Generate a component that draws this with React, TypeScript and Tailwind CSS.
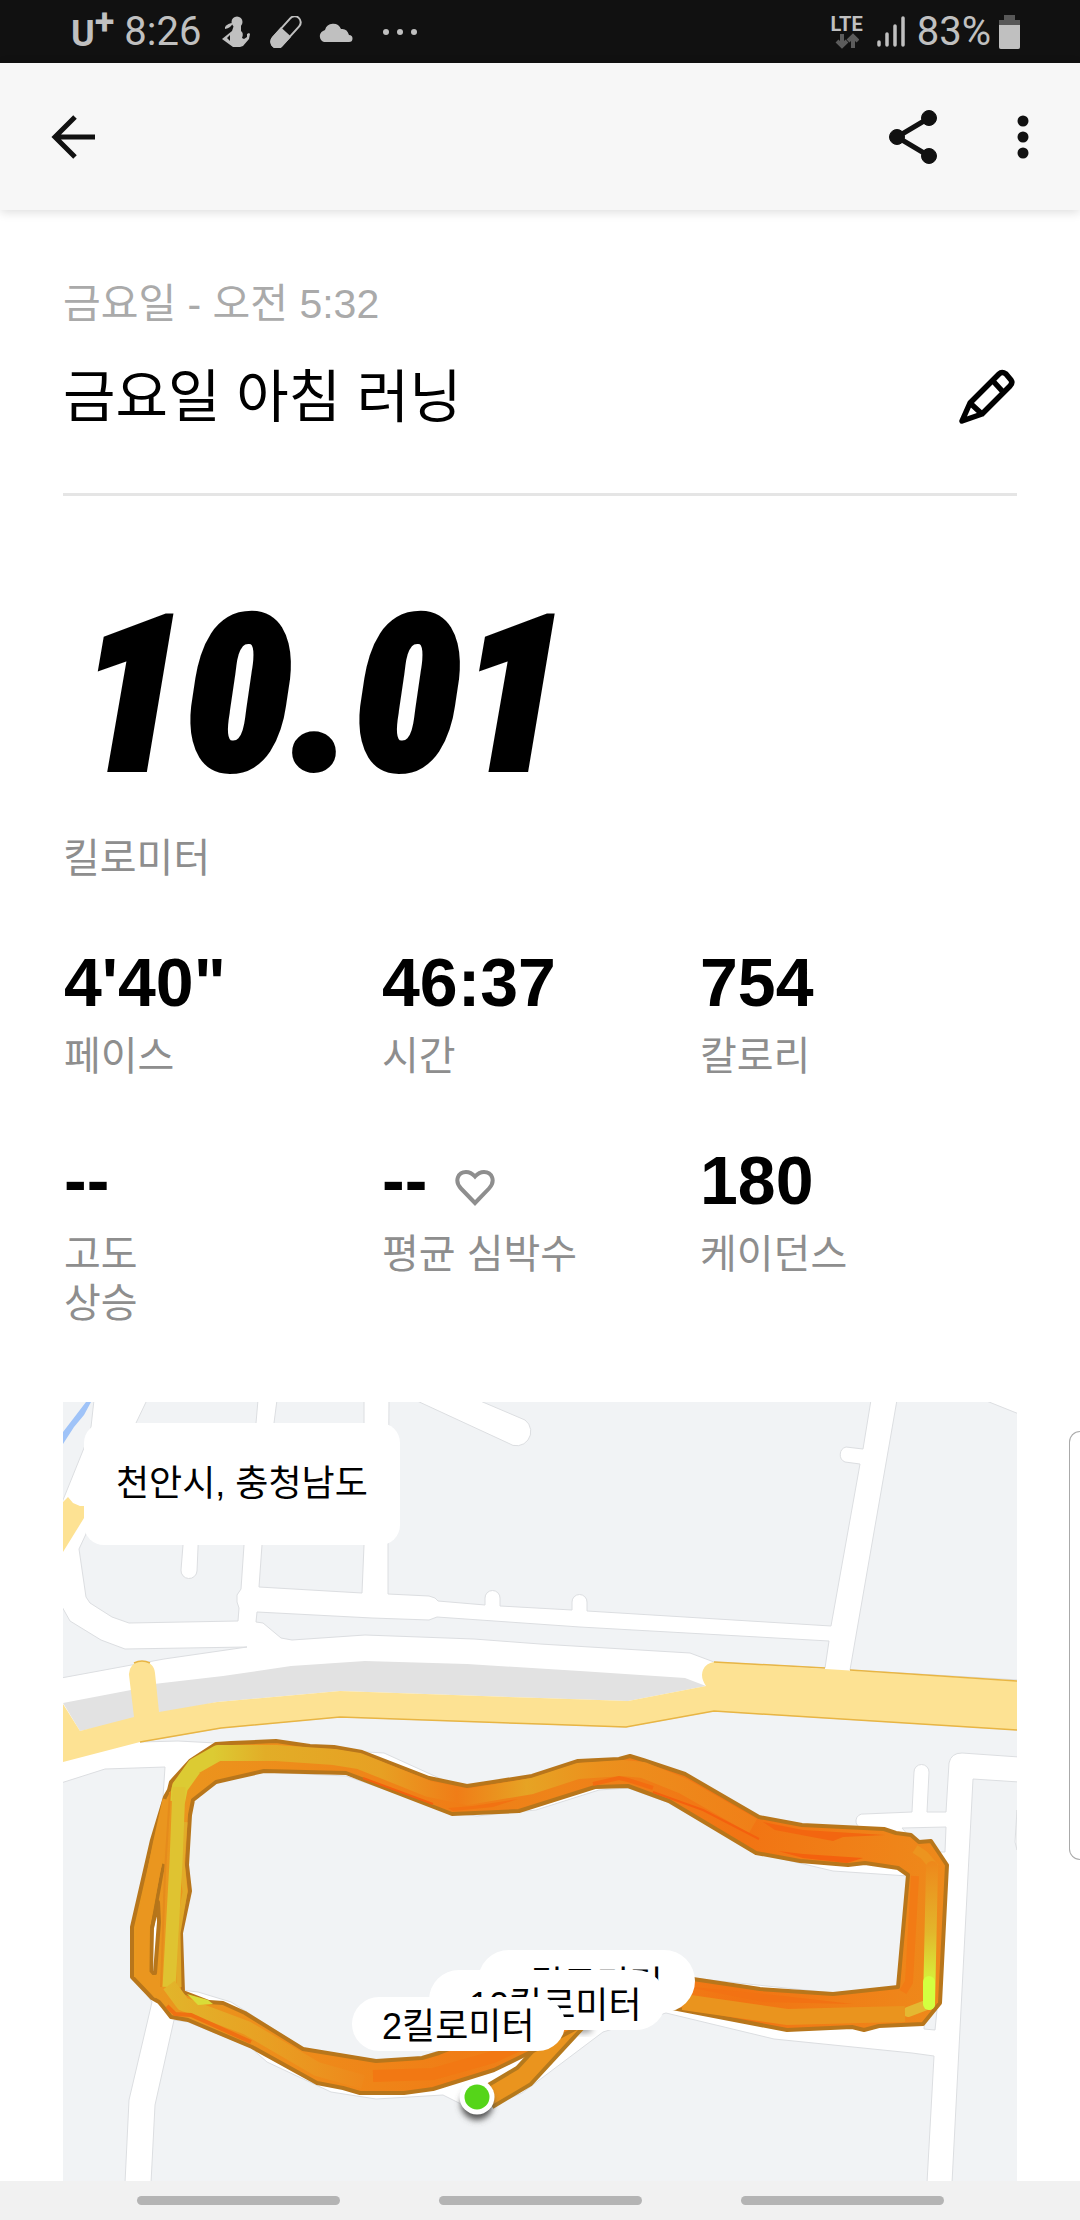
import type { ReactNode } from "react";

type Stat = {
  value: string;
  label: ReactNode;
  heart?: boolean;
};

const stats: Stat[] = [
  { value: "4'40\"", label: "페이스" },
  { value: "46:37", label: "시간" },
  { value: "754", label: "칼로리" },
  {
    value: "--",
    label: (
      <>
        고도
        <br />
        상승
      </>
    ),
  },
  { value: "--", label: "평균 심박수", heart: true },
  { value: "180", label: "케이던스" },
];

// City blocks, everything between them reads as road
const blocks = [
  "M-2 -2H31L28 25L21 46L-2 103Z",
  "M84 -2H195L193 21V60H60L73 21Z",
  "M214 -2H301V60H209L211 21Z",
  "M326 -2H352L445 41A12 12 0 0 0 462 18L415 -2H808L800 47L783 45A8 8 0 0 0 782 60L797 62L768 224L524 209V200A7 7 0 0 0 509 200V208L437 204V196A7 7 0 0 0 422 196V203L375 199L372 196L366 194L325 192V140Z",
  "M834 -2H921L956 12V278L787 268Z",
  "M766 239L762 266L651 260L627 251L477 242L411 237L302 233L229 238L218 236L200 221L193 220L194 210L309 216L366 218L374 215L517 225Z",
  "M196 185L299 191L301 143V100H199V143Z",
  "M23 132L16 147L23 195L27 201L49 215L66 221L175 219L176 206L174 200L174 193L178 187L181 143V100H137L134 169A8 8 0 0 1 118 168L120 143V100H30Z",
  "M-2 203L7 219L38 238L62 247L184 245L101 257L-2 276Z",
  "M77 340L158 326L277 315L477 322L563 325L651 309L956 328V355L899 351Q888 351 886 361L883 410H864L866 370A7 7 0 0 0 851 370L849 410L801 412A7 7 0 0 0 799 426L821 429L739 426L696 418L622 374L567 358L515 362L469 377L404 387L376 376L321 351L153 341L115 339Z",
  "M883 425L882 450H860L839 426Z",
  "M201 370L283 374L390 411L414 414L473 408L536 388L565 386L604 400L694 451L770 469L845 474L835 586L770 591L628 576L500 600L359 655L313 658L240 646L184 610L168 600L135 590L119 588L118 531L127 488L123 411L128 398L153 380Z",
  "M-2 381L42 367L102 365L100 395L71 525V575L89 600L66 698L62 781H-2Z",
  "M111 618L92 703L88 781H864L871 654L849 651L711 637L603 611L540 630L459 691L430 703H400L380 693L313 697L268 690L204 660L187 645L125 620Z",
  "M874 608L872 628L861 627L862 615Z",
  "M910 377L956 380V781H889Z",
];

const routeShape =
  "M153 342L168 341L213 339L247 344L271 345L299 350L366 376L404 384L469 374L515 359L556 357L567 354L580 358L622 372L696 415L739 423L821 427L833 431L848 433L856 440L868 439L884 463L877 601L860 622L816 624L801 628L789 625L724 628L604 605L540 612L476 646L431 668L370 687L341 691L297 691L280 686L254 681L189 645L125 618L108 615L101 606L96 600L89 596L69 575V525L89 438L102 395L106 388L108 380L127 359Z" +
  "M153 380L201 369L283 371L389 412L456 409L532 385L565 384L606 399L693 451L737 459L785 463L802 461L835 466L845 473L835 585L770 592L697 587L630 577L560 575L480 610L376 651L359 656L313 659L240 647L182 611L160 601L146 600L120 590L118 531L127 489L124 463L127 413L130 398Z" +
  "M89 526L95 500L96 520L92 571H88Z";

function StatusBar() {
  return (
    <div className="flex h-[63px] items-center justify-between bg-[#111] pr-[60px] pl-[71px] font-['Roboto',sans-serif] text-[40px] leading-none text-[#c0c0c0]">
      <div className="flex items-center">
        <span className="mt-1 flex text-[36px] leading-9 font-bold">
          U<span className="-mt-3">+</span>
        </span>
        <span className="ml-[10px]">8:26</span>
        <svg className="ml-5 h-8 w-7" viewBox="0 0 28 32" fill="currentColor">
          <circle cx="15" cy="6" r="5.500" />
          <path d="M12 9h7v6q3 2 1 7l2 1 3-2v-3l2-1 1 1-1 5-6 7-3 1H11L0 23l10-8Z" />
          <path d="M3 11q3-4 8-4-2 5-8 6Z" />
          <path d="M5 22l3-3v6Z" fill="#111" />
        </svg>
        <svg className="ml-5 h-8 w-8" viewBox="0 0 32 32" fill="none" stroke="currentColor">
          <g transform="rotate(42 16 16)">
            <rect x="10" y="-3" width="12" height="38" rx="6" strokeWidth="2" />
            <path d="M9 16H23V29A7 7 0 0 1 9 29Z" fill="currentColor" stroke="none" />
          </g>
        </svg>
        <svg className="ml-4 h-5 w-9" viewBox="0 0 36 20" fill="currentColor">
          <path d="M6 20A6 6 0 0 1 5 9Q7 8 7 8A8.500 8.500 0 0 1 23 7Q29 6 31 13A3.500 3.500 0 0 1 31 20Z" />
        </svg>
        <svg className="ml-7 h-2 w-9" viewBox="0 0 36 8" fill="currentColor">
          <circle cx="4" cy="4" r="3" />
          <circle cx="18" cy="4" r="3" />
          <circle cx="32" cy="4" r="3" />
        </svg>
      </div>
      <div className="flex items-center">
        <div className="flex flex-col items-center">
          <span className="text-[20px] leading-[18px] font-bold">LTE</span>
          <svg className="h-4 w-6" viewBox="0 0 24 16" fill="none" stroke="#5c5c5c" strokeWidth="4">
            <path d="M7 1V13M2 8L7 13L12 8M18 15V3M13 8L18 3L23 8" />
          </svg>
        </div>
        <svg className="ml-[14px] h-8 w-7" viewBox="0 0 28 32" stroke="currentColor" strokeWidth="3.500" strokeLinecap="round">
          <path d="M2 26V29M10 18V29M18 10V29M26 2V29" />
        </svg>
        <span className="ml-3">83%</span>
        <svg className="ml-2 h-[34px] w-[21px]" viewBox="0 0 21 34">
          <path d="M5 0H16V5H21V32Q21 34 19 34H2Q0 34 0 32V5H5Z" fill="#585858" />
          <path d="M0 10H21V32Q21 34 19 34H2Q0 34 0 32Z" fill="#c0c0c0" />
        </svg>
      </div>
    </div>
  );
}

function AppBar() {
  return (
    <header className="relative flex h-[147px] items-center justify-between bg-[#f7f7f7] px-[51px] text-[#111] shadow-[0_2px_10px_rgba(0,0,0,0.14)]">
      <button type="button" aria-label="뒤로">
        <svg className="h-11 w-11" viewBox="0 0 44 44" fill="none" stroke="currentColor" strokeWidth="5">
          <path d="M44 22H5M24 2L4 22L24 42" />
        </svg>
      </button>
      <div className="flex items-center gap-20">
        <button type="button" aria-label="공유">
          <svg className="h-14 w-12" viewBox="0 0 48 56" fill="currentColor" stroke="currentColor">
            <path d="M40 9L8 28L40 47" fill="none" strokeWidth="5" />
            <circle cx="40" cy="9" r="7.500" strokeWidth="1" />
            <circle cx="8" cy="28" r="7.500" strokeWidth="1" />
            <circle cx="40" cy="47" r="7.500" strokeWidth="1" />
          </svg>
        </button>
        <button type="button" aria-label="더보기">
          <svg className="h-11 w-3" viewBox="0 0 12 44" fill="currentColor">
            <circle cx="6" cy="6" r="5.500" />
            <circle cx="6" cy="22" r="5.500" />
            <circle cx="6" cy="38" r="5.500" />
          </svg>
        </button>
      </div>
    </header>
  );
}

function StatCell({ value, label, heart }: Stat) {
  return (
    <div className="pl-px">
      <dd className="flex h-[72px] items-center gap-7 text-[68px] leading-[72px] font-bold text-black">
        {value}
        {heart && (
          <svg className="mt-4 h-9 w-10" viewBox="0 0 40 36" fill="none" stroke="#8e8e8e" strokeWidth="4">
            <path d="M20 33L6 18.500C-1 11 3 2 11 2Q16 2 20 6.500Q24 2 29 2C37 2 41 11 34 18.500Z" />
          </svg>
        )}
      </dd>
      <dt className="mt-[14px] text-[40px] leading-[49px] text-[#8e8e8e]">{label}</dt>
    </div>
  );
}

function RouteMap() {
  return (
    <svg className="block w-full" viewBox="0 0 954 779" fill="none">
      <defs>
        <linearGradient id="heat" gradientUnits="userSpaceOnUse" x1="70" y1="0" x2="884" y2="0">
          <stop offset="0" stopColor="#e9981f" />
          <stop offset="0.2" stopColor="#ee8c1a" />
          <stop offset="0.4" stopColor="#f07d16" />
          <stop offset="0.52" stopColor="#ee8419" />
          <stop offset="0.75" stopColor="#f27413" />
          <stop offset="1" stopColor="#ee8a1b" />
        </linearGradient>
        <linearGradient id="top" gradientUnits="userSpaceOnUse" x1="115" y1="0" x2="696" y2="0">
          <stop offset="0" stopColor="#dccb33" />
          <stop offset="0.06" stopColor="#dccb33" />
          <stop offset="0.15" stopColor="#e2ad27" />
          <stop offset="0.35" stopColor="#e7a023" />
          <stop offset="0.48" stopColor="#f07d17" />
          <stop offset="0.6" stopColor="#e6a324" />
          <stop offset="0.72" stopColor="#ec911d" />
          <stop offset="1" stopColor="#f07f18" />
        </linearGradient>
        <linearGradient id="east" gradientUnits="userSpaceOnUse" x1="0" y1="460" x2="0" y2="600">
          <stop offset="0" stopColor="#ee881b" />
          <stop offset="0.5" stopColor="#e2b62b" />
          <stop offset="0.8" stopColor="#d8e838" />
          <stop offset="1" stopColor="#d3ff40" />
        </linearGradient>
        <linearGradient id="south" gradientUnits="userSpaceOnUse" x1="105" y1="0" x2="300" y2="0">
          <stop offset="0" stopColor="#e2b42a" />
          <stop offset="0.5" stopColor="#e8a023" />
          <stop offset="1" stopColor="#ee881b" />
        </linearGradient>
        <filter id="soft" x="-50%" y="-50%" width="200%" height="200%">
          <feGaussianBlur stdDeviation="3" />
        </filter>
      </defs>

      <rect width="954" height="779" fill="#fff" />
      <g fill="#f1f3f5" stroke="#dcdee1">
        {blocks.map((d) => (
          <path key={d} d={d} />
        ))}
      </g>
      <path d="M23 0H28L21 13L11 25L0 42V30L10 17Z" fill="#9fc3f8" />
      <path d="M954 408L952 440L954 448Z" fill="#fff" stroke="#dcdee1" />

      {/* Main road */}
      <path d="M0 301L68 288L91 282L160 274L228 264L302 259L404 262L517 269L622 276L643 284L565 299L477 296L277 289L154 300L17 329Z" fill="#e2e2e2" />
      <g fill="#fde293">
        <path d="M0 100L5 95L10 101L17 104H21V116L0 150Z" />
        <path d="M0 302L17 329L71 315L66 273A13 13 0 0 1 92 271L96 310L154 300L277 289L477 296L565 299L643 284Q637 275 640 268Q643 261 651 260L954 279V328L651 309L563 325L477 322L277 315L158 326L77 340L0 360Z" />
      </g>
      <path
        d="M77 340L158 326L277 315L477 322L563 325L651 309L954 328M651 260L762 266M787 268L954 279M71 261Q79 257 87 261"
        stroke="#e8b544"
        strokeWidth="1.500"
      />

      {/* Recorded route */}
      <ellipse cx="520" cy="627" rx="10" ry="4" fill="#999" filter="url(#soft)" />
      <path d="M424 696L461 674L520 610" stroke="#b5791c" strokeWidth="25" />
      <path d="M424 696L461 674L520 610" stroke="#ea941e" strokeWidth="17" />
      <path d={routeShape} fill="url(#heat)" fillRule="evenodd" stroke="#b8761b" strokeWidth="4" strokeLinejoin="round" />
      <path d="M89 526L99 470L101 462" stroke="#b5751a" strokeWidth="3.500" />
      <path d="M106 398L96 443L80 525V572L97 592" stroke="#ea961f" strokeWidth="13" />
      <path d="M122 420L119 460L122 490L115 531L116 585" stroke="#e2ab29" strokeWidth="5" />
      <path d="M114 400L117 385L132 364L155 351H213L271 355L296 359L366 387L404 395L469 384L515 369L560 366L580 368L620 384L690 424" stroke="url(#top)" strokeWidth="16" strokeLinejoin="round" />
      <path d="M116 385L113 460L106 585" stroke="#dfc331" strokeWidth="13" />
      <path d="M107 390L102 470L98 585" stroke="#e58b1c" strokeWidth="2" />
      <path d="M106 583L120 602L184 626L254 667L300 680" stroke="url(#south)" strokeWidth="14" strokeLinejoin="round" />
      <path d="M104 604L112 612L128 613L188 640" stroke="#f07012" strokeWidth="4" />
      <path d="M124 592L145 598L150 602L135 603Z" fill="#d9dc38" />
      <path d="M385 406L410 404L455 397L430 405L390 409Z" fill="#f27212" />
      <path d="M300 376L370 402M590 390L640 408L696 437" stroke="#f4600e" strokeWidth="2" />
      <path d="M530 382L556 376L565 378L590 386" stroke="#f36c10" strokeWidth="4" />
      <path d="M700 420L740 428L822 433L780 435L770 439L712 428Z" fill="#f36610" />
      <path d="M715 449L740 452L800 456L784 461L740 456Z" fill="#f4610e" />
      <path d="M852 447L861 453L872 466" stroke="#ec941f" strokeWidth="9" strokeLinejoin="round" />
      <path d="M852 474L846 580L840 590" stroke="#f27b15" strokeWidth="8" />
      <path d="M869 465L866 602" stroke="url(#east)" strokeWidth="12" strokeLinecap="round" />
      <path d="M845 610L866 602" stroke="#e4b832" strokeWidth="10" strokeLinecap="round" />
      <path d="M866 580V602" stroke="#d3ff40" strokeWidth="12" strokeLinecap="round" />
      <path d="M620 600L724 615L800 613L842 612" stroke="#ea941e" strokeWidth="16" />
      <path d="M620 584L700 600L790 602L720 594Z" fill="#f27213" />
      <path d="M310 674L370 672L430 655L480 632" stroke="#f27813" strokeWidth="12" />

      {/* Start marker */}
      <circle cx="414" cy="702" r="16" fill="#555" filter="url(#soft)" />
      <circle cx="414" cy="695" r="17.500" fill="#fff" />
      <circle cx="414" cy="695" r="12.500" fill="#55d519" />
    </svg>
  );
}

export default function App() {
  return (
    <div className="relative flex min-h-screen flex-col overflow-x-hidden bg-white font-['Liberation_Sans','Noto_Sans_CJK_KR',sans-serif]">
      <StatusBar />
      <AppBar />

      <main className="flex-1 px-[63px] pt-[70px]">
        <p className="text-[41px] leading-[49px] text-[#aaa]">금요일 - 오전 5:32</p>
        <div className="mt-8 flex items-center justify-between border-b-[3px] border-[#e5e5e5] pb-[60px]">
          <h1 className="text-[57px] leading-[72px] text-black">금요일 아침 러닝</h1>
          <button type="button" aria-label="이름 수정">
            <svg className="h-14 w-[60px]" viewBox="0 0 60 56" fill="none" stroke="#000" strokeWidth="5.500" strokeLinejoin="round">
              <path d="M5 52L13 34L42 5Q45 2 49 5L54 11Q56 14 53 17L25 45Z" />
              <path d="M36 12L47 24M13 34L25 45" />
            </svg>
          </button>
        </div>

        <p className="mt-[120px] pl-4 font-['Roboto_Condensed',sans-serif] text-[214px] leading-[160px] font-black text-black italic [-webkit-text-stroke:6px_black]">
          10.01
        </p>
        <p className="mt-[58px] text-[40px] leading-[49px] text-[#8e8e8e]">킬로미터</p>

        <dl className="mt-[63px] grid grid-cols-3 gap-y-[63px]">
          {stats.map((stat, i) => (
            <StatCell key={i} {...stat} />
          ))}
        </dl>

        <section className="relative mt-[74px] overflow-hidden text-[36px] text-black" aria-label="러닝 경로">
          <RouteMap />
          <div className="absolute top-[21px] left-[21px] rounded-[20px] bg-white px-8 py-9 leading-[50px]">
            천안시, 충청남도
          </div>
          <span className="absolute top-[548px] left-[415px] rounded-full bg-white pt-2 pr-8 pl-8 leading-[54px]">9킬로미터</span>
          <span className="absolute top-[568px] left-[366px] rounded-full bg-white pt-3 pr-6 pl-10 leading-[48px]">10킬로미터</span>
          <span className="absolute top-[595px] left-[289px] rounded-full bg-white px-[30px] pt-[6px] leading-[48px]">2킬로미터</span>
        </section>
      </main>

      <nav className="flex h-[39px] items-center justify-center gap-[99px] bg-[#f1f1f1]">
        <button type="button" aria-label="최근 앱" className="h-[9px] w-[203px] rounded-full bg-[#b4b4b4]" />
        <button type="button" aria-label="홈" className="h-[9px] w-[203px] rounded-full bg-[#b4b4b4]" />
        <button type="button" aria-label="이전" className="h-[9px] w-[203px] rounded-full bg-[#b4b4b4]" />
      </nav>

      {/* Edge panel handle */}
      <div className="absolute top-[1431px] right-0 h-[429px] w-[11px] rounded-l-[14px] border border-r-0 border-[#aaa] bg-white" />
    </div>
  );
}
